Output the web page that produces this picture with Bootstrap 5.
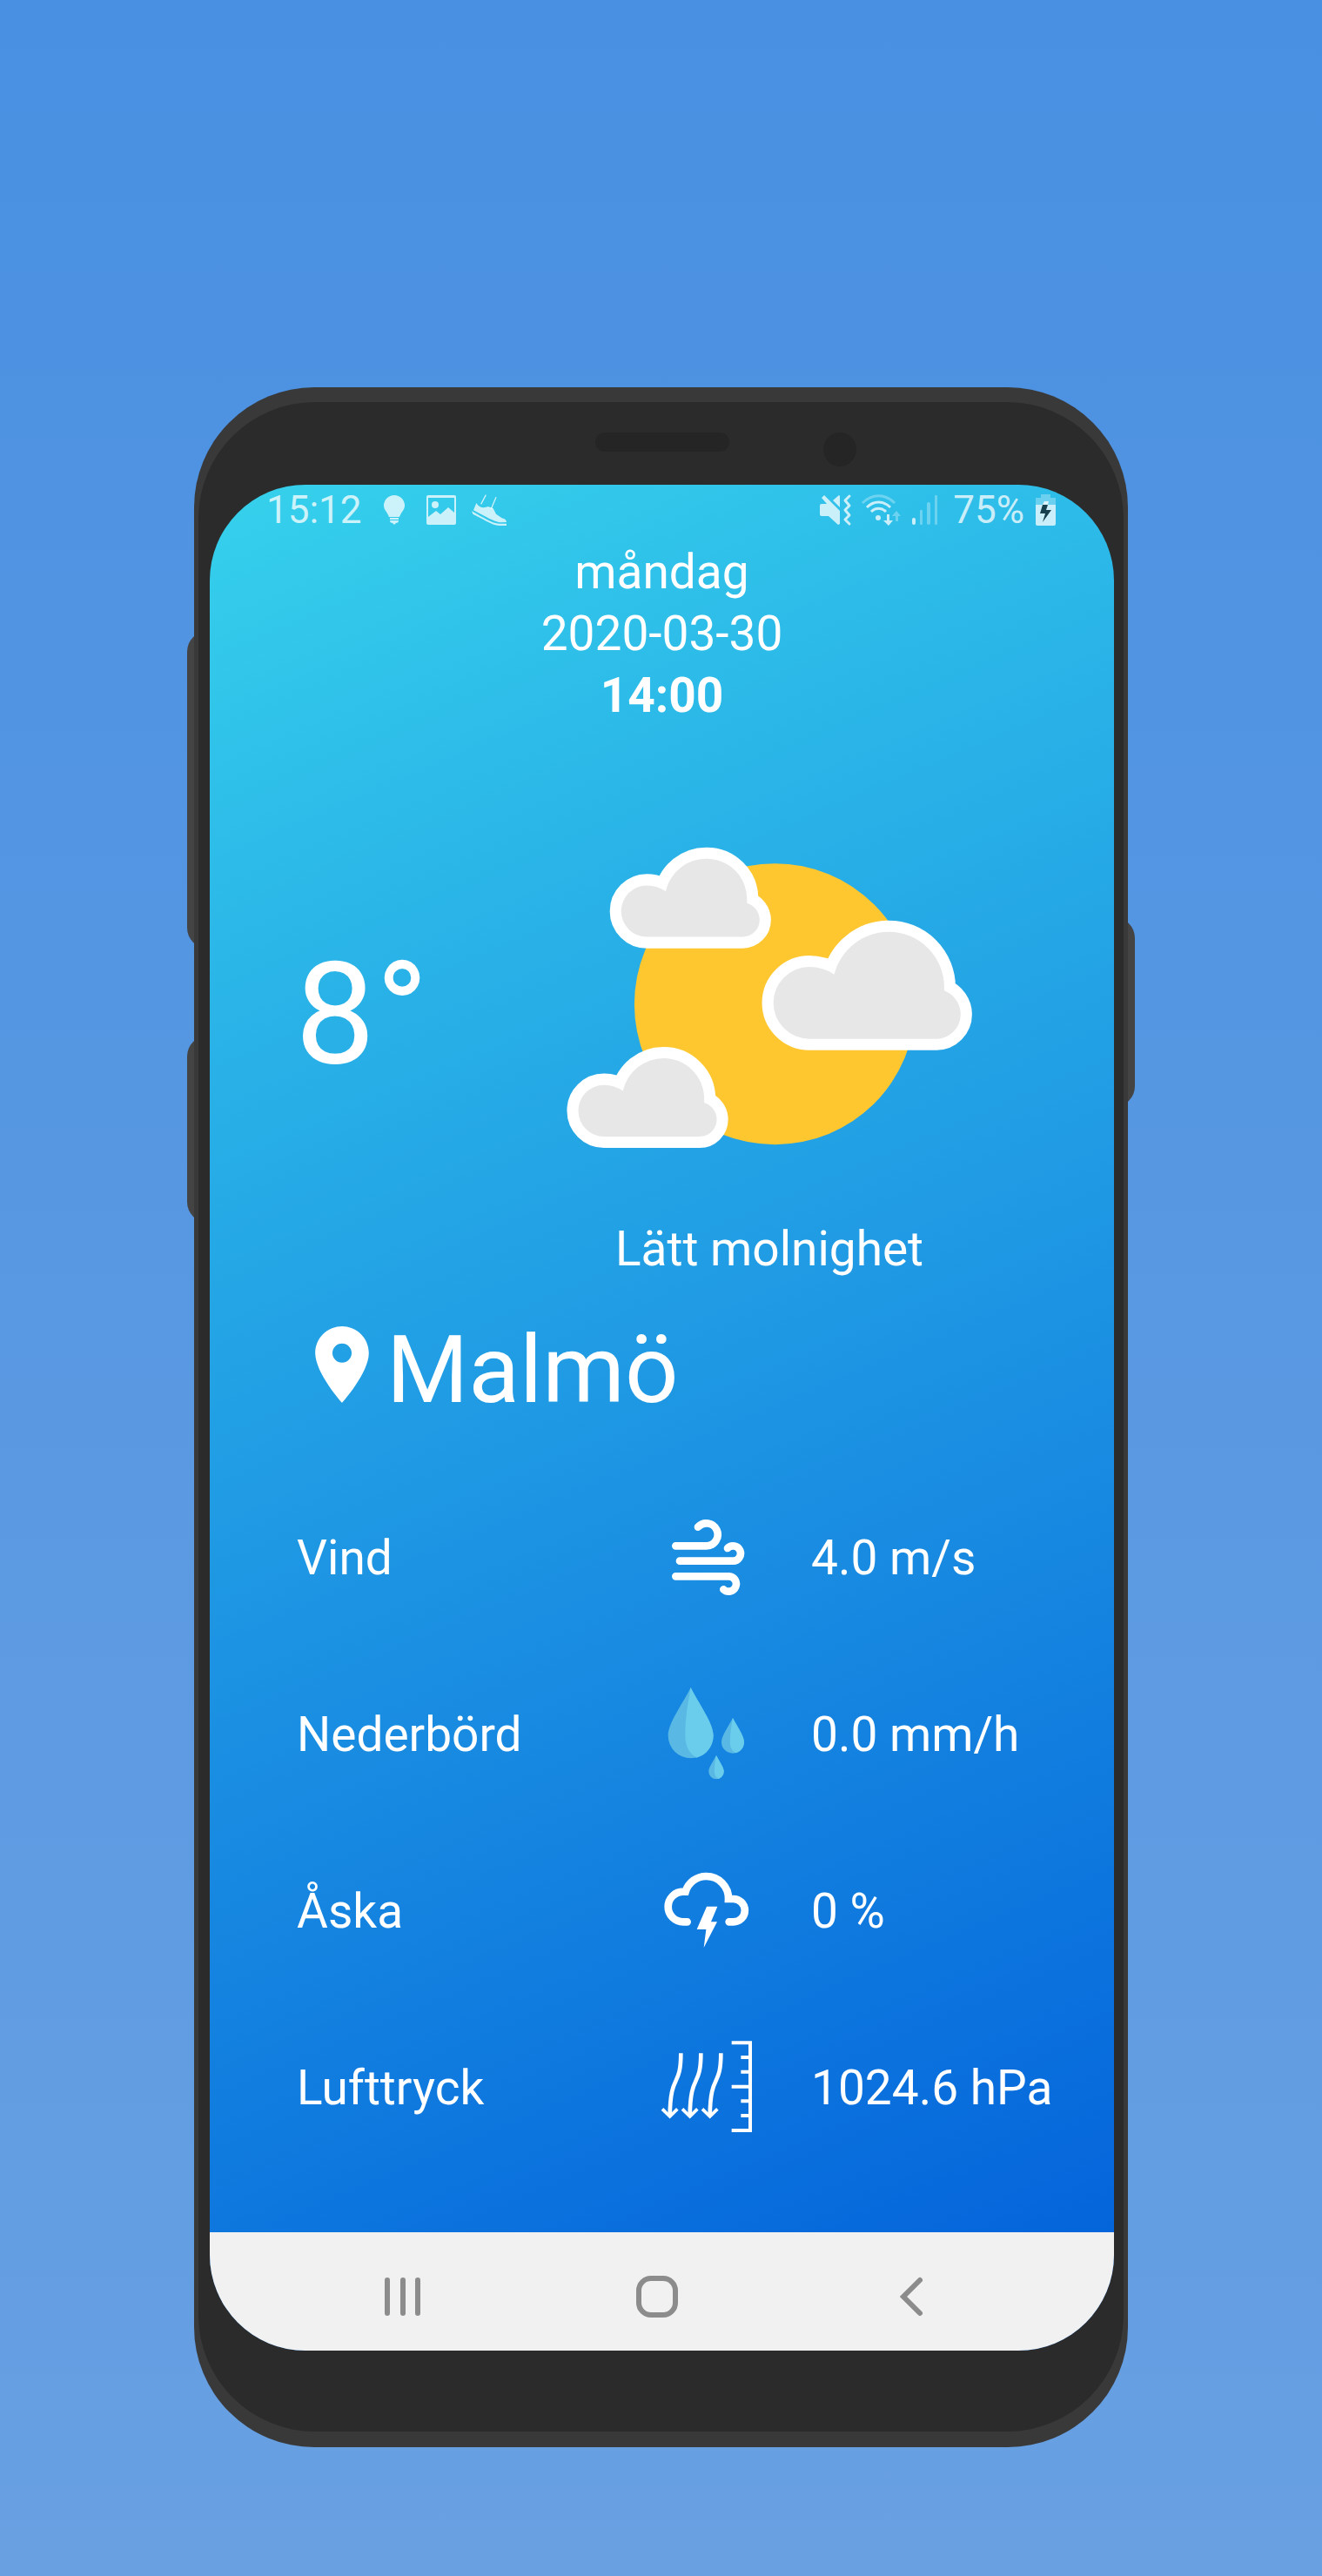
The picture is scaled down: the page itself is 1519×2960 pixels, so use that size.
<!DOCTYPE html>
<html lang="sv">
<head>
<meta charset="utf-8">
<meta name="viewport" content="width=device-width, initial-scale=1">
<title>Väder – Malmö</title>
<link href="https://cdn.jsdelivr.net/npm/bootstrap@5.3.0/dist/css/bootstrap.min.css" rel="stylesheet">
<style>
  body { font-family: Roboto, "Noto Sans", sans-serif; background: linear-gradient(#4990e2, #68a0e2); color: #fff; }
  svg { display: block; flex: none; overflow: visible; }
  .stage { padding: 445px 16px 148px; }
  .phone { max-width: 1073px; z-index: 0; }
  .shell { background: #393939; border-radius: 138px; padding: 17px 5px 18px; }
  .bezel { background: #2b2b2b; border-radius: 134px; padding: 0 11px 93px 13px; }
  .side-key { position: absolute; z-index: -1; width: 48px; background: #444; border-radius: 24px; }
  .key-volume { left: -8px; top: 280px; height: 365px; }
  .key-assist { left: -8px; top: 745px; height: 215px; }
  .key-power { right: -8px; top: 609px; height: 218px; }
  .sensors { height: 95px; padding-top: 35px; padding-left: 146px; gap: 108px; }
  .speaker { width: 154px; height: 22px; border-radius: 11px; background: #252525; }
  .lens { width: 38px; height: 39px; border-radius: 50%; background: #252525; }
  .display-area { border-radius: 110px; background: linear-gradient(157deg, #36d1ec 0%, #2bb7e8 21%, #1d94e3 52%, #0464db 95%); }
  .status { padding: 3px 67px 0 65px; font-size: 44px; line-height: 52px; color: rgba(255,255,255,.75); }
  .status svg { fill: currentColor; }
  .status-start svg { margin-left: 25px; }
  .status-end { gap: 13px; }
  .when { padding-top: 10px; font-size: 55px; line-height: 71px; }
  .hero { padding: 139px 163px 0 98px; }
  .temp { font-size: 164px; line-height: 192px; padding-top: 95px; }
  .sky svg { margin-bottom: 81px; }
  .sky { font-size: 55px; line-height: 71px; }
  .place { padding: 41px 60px 53px 121px; gap: 20px; font-size: 108px; line-height: 124px; }
  .place svg { margin-bottom: 12px; }
  .facts { padding: 0 0 64px 100px; font-size: 55px; line-height: 71px; }
  .fact { height: 203px; }
  .fact dt { flex: 419 1 0; }
  .fact dd { flex: 520 1 0; gap: 68px; }
  .keys { height: 136px; background: #f1f1f1; padding: 12px 12px 0 0; gap: 192px; }
  .keys button { width: 100px; height: 100px; }
</style>
<script src="https://cdn.jsdelivr.net/npm/bootstrap@5.3.0/dist/js/bootstrap.bundle.min.js"></script>
</head>
<body>
<main class="stage d-flex justify-content-center min-vh-100">
  <div class="phone w-100 position-relative">
    <span class="side-key key-volume"></span>
    <span class="side-key key-assist"></span>
    <span class="side-key key-power"></span>
    <div class="shell">
      <div class="bezel">
        <div class="sensors d-flex justify-content-center align-items-start">
          <div class="speaker"></div>
          <div class="lens"></div>
        </div>
        <div class="display-area overflow-hidden">
          <header class="status d-flex align-items-center justify-content-between">
            <div class="status-start d-flex align-items-center">
              <span>15:12</span>
              <svg width="24" height="34" viewBox="0 0 24 34" aria-hidden="true"><path d="M12 0a12 12 0 0 1 12 12c0 5-4 7-6 13H6C4 19 0 17 0 12A12 12 0 0 1 12 0zM7 26h10v2H7zM7 29h10c0 2-1 3-3 3L12 34l-2-2C8 32 7 31 7 29z"/></svg>
              <svg width="34" height="34" viewBox="0 0 34 34" aria-hidden="true"><path fill-rule="evenodd" d="M2 0h30a2 2 0 0 1 2 2v30a2 2 0 0 1-2 2H2a2 2 0 0 1-2-2V2a2 2 0 0 1 2-2zm0 3v22l9-7 5 4 9-8 7 6V3z"/><circle cx="10" cy="11" r="4"/></svg>
              <svg width="41" height="38" viewBox="357 27 123 114" aria-hidden="true"><g transform="translate(0 0)"><path d="M352 60C362 78 380 78 392 72L410 78L420 98L440 112Q456 116 456 126L436 127C420 126 400 116 342 85Z"/><path d="M336 88C380 112 410 134 436 131H456V138H430C405 136 370 112 340 98Z"/><path d="M385 32L368 64M420 40L403 80" fill="none" stroke="currentColor" stroke-width="4"/></g></svg>
            </div>
            <div class="status-end d-flex align-items-center">
              <svg width="35" height="36" viewBox="0 0 35 36" aria-hidden="true"><path d="M0 13q0-2 2-2h6L2 4l3-3 18 18v15l-2 1-11-10H2q-2 0-2-2zM15 7l7-6 1 1v13z"/><path d="M34 2l-5 5 5 6-5 5 5 6-5 5 5 5" fill="none" stroke="currentColor" stroke-width="3" stroke-linecap="round" stroke-linejoin="round"/></svg>
              <svg width="45" height="36" viewBox="0 0 45 36" aria-hidden="true"><g fill="none" stroke="currentColor" stroke-width="3"><path opacity=".4" d="M1 10C12-1 27-1 38 10"/><path d="M6 15C14 7 25 7 33 15M11 20c5-5 12-5 17 0"/></g><circle cx="19" cy="27" r="3"/><path d="M29 23h3v7h4L31 36 25 30h4z"/><path opacity=".4" d="M39 31v-6h-4l5-6 5 6h-3v6z"/></svg>
              <svg width="30" height="36" viewBox="0 0 30 36" aria-hidden="true"><rect y="27" width="4" height="8" rx="2"/><g opacity=".4"><rect x="9" y="18" width="3" height="17" rx="1"/><rect x="17" y="9" width="4" height="26" rx="2"/><rect x="26" y="1" width="3" height="34" rx="1"/></g></svg>
              <span class="ps-1">75%</span>
              <svg width="23" height="36" viewBox="0 0 23 36" aria-hidden="true"><path opacity=".4" d="M6 0h11v4h6v8H0V4h6z"/><path d="M0 12h23v22q0 2-2 2H2q-2 0-2-2zM10 8h5l-1 4H8z"/><path fill="#17404f" d="M8 12h6l-2 6h6L8 32l3-10H5z"/></svg>
            </div>
          </header>
          <div class="when text-center">
            <div>måndag</div>
            <div>2020-03-30</div>
            <div class="fw-bold">14:00</div>
          </div>
          <section class="hero d-flex justify-content-between align-items-start">
            <div class="temp">8°</div>
            <div class="sky text-center">
              <svg width="466" height="345" viewBox="90 100 1353 1002" role="img" aria-label="Sol med lätta moln">
                <defs>
                  <path id="puff" d="M358 398a86 86 0 0 1 0-172q34 0 63 20A138 138 0 0 1 557 137A135 135 0 0 1 692 272V285A60 60 0 0 1 734 341A57 57 0 0 1 677 398Z"/>
                  <path id="bigpuff" d="M900 738a120 120 0 0 1 0-240q45 0 83 25A188 188 0 0 1 1165 381A185 185 0 0 1 1350 566V577A86 86 0 0 1 1405 656A82 82 0 0 1 1324 738Z"/>
                </defs>
                <circle cx="785" cy="622" r="469" fill="#ffc72f"/>
                <g fill="#fff" stroke="#fff" stroke-width="76"><use href="#puff"/><use href="#puff" x="-143" y="666"/><use href="#bigpuff"/></g>
                <g fill="#e7e7e7"><use href="#puff"/><use href="#puff" x="-143" y="666"/><use href="#bigpuff"/></g>
              </svg>
              <div>Lätt molnighet</div>
            </div>
          </section>
          <h1 class="place d-flex align-items-center fw-normal m-0">
            <svg width="62" height="88" viewBox="5 2 14 20" fill="#fff" aria-hidden="true"><path d="M12 2C8.130 2 5 5.130 5 9c0 5.250 7 13 7 13s7-7.750 7-13c0-3.870-3.130-7-7-7zm0 9.500a2.500 2.500 0 1 1 0-5 2.500 2.500 0 0 1 0 5z"/></svg>
            <span>Malmö</span>
          </h1>
          <dl class="facts m-0">
            <div class="fact d-flex align-items-center">
              <dt class="fw-normal">Vind</dt>
              <dd class="d-flex align-items-center m-0">
                <svg width="104" height="106" viewBox="60 51 312 318" fill="none" stroke="#fff" stroke-width="26" stroke-linecap="round" aria-hidden="true"><path d="M109 166H215A39 39 0 1 0 186 101M123 218H306A26 26 0 1 0 288 174M109 271H293A26 26 0 1 1 274 316"/></svg>
                <span>4.0 m/s</span>
              </dd>
            </div>
            <div class="fact d-flex align-items-center">
              <dt class="fw-normal">Nederbörd</dt>
              <dd class="d-flex align-items-center m-0">
                <svg width="104" height="106" viewBox="60 663 312 318" aria-hidden="true">
                  <defs><g id="drop"><path fill="#59b9e4" d="M0 0C26 54 78 122 78 166A78 78 0 0 1-78 166C-78 122-26 54 0 0Z"/><path fill="#6acdec" d="M0 0C26 54 78 122 78 166C78 204 52 235 20 242C-6 228-19 200-19 166C-19 105-10 54 0 0Z"/></g></defs>
                  <use href="#drop" transform="translate(161 657)"/><use href="#drop" transform="translate(306 762) scale(.5)"/><use href="#drop" transform="translate(249 891) scale(.335)"/>
                </svg>
                <span>0.0 mm/h</span>
              </dd>
            </div>
            <div class="fact d-flex align-items-center">
              <dt class="fw-normal">Åska</dt>
              <dd class="d-flex align-items-center m-0">
                <svg width="104" height="106" viewBox="60 70 312 318" aria-hidden="true"><path fill="none" stroke="#fff" stroke-width="26" stroke-linecap="round" d="M149 263H135A52 52 0 0 1 135 159H143A74 74 0 0 1 215 106A76 76 0 0 1 291 184H308A39 39 0 0 1 308 263H293"/><path fill="#fff" d="M216 210H253L231 263H252L206 352L214 289H182Z"/></svg>
                <span>0 %</span>
              </dd>
            </div>
            <div class="fact d-flex align-items-center">
              <dt class="fw-normal">Lufttryck</dt>
              <dd class="d-flex align-items-center m-0">
                <svg width="104" height="106" viewBox="60 680 312 318" fill="none" stroke="#fff" stroke-width="12" aria-hidden="true">
                  <path d="M302 681H366V983H302M334 731H366M334 781H366M302 832H366M334 882H366M334 932H366"/>
                  <g id="flow" stroke-width="14"><path d="M127 717C127 840 91 780 89 932"/><path d="M63 909L89 935L115 909" stroke-width="11"/></g>
                  <use href="#flow" x="69"/><use href="#flow" x="138"/>
                </svg>
                <span>1024.6 hPa</span>
              </dd>
            </div>
          </dl>
          <nav class="keys d-flex justify-content-center align-items-center" aria-label="Systemknappar">
            <button type="button" class="btn border-0 p-0 d-flex justify-content-center align-items-center" aria-label="Senaste appar"><svg width="42" height="44" viewBox="0 0 42 44" fill="none" stroke="#8c8c8c" stroke-width="6" stroke-linecap="round"><path d="M3 3v38M21 3v38M38 3v38"/></svg></button>
            <button type="button" class="btn border-0 p-0 d-flex justify-content-center align-items-center" aria-label="Hem"><svg width="48" height="48" viewBox="0 0 48 48" fill="none" stroke="#8c8c8c" stroke-width="6"><rect x="3" y="3" width="42" height="42" rx="14"/></svg></button>
            <button type="button" class="btn border-0 p-0 d-flex justify-content-center align-items-center" aria-label="Tillbaka"><svg width="26" height="44" viewBox="0 0 26 44" fill="none" stroke="#8c8c8c" stroke-width="6" stroke-linecap="round"><path d="M23 3L4 22L23 41"/></svg></button>
          </nav>
        </div>
      </div>
    </div>
  </div>
</main>
</body>
</html>
